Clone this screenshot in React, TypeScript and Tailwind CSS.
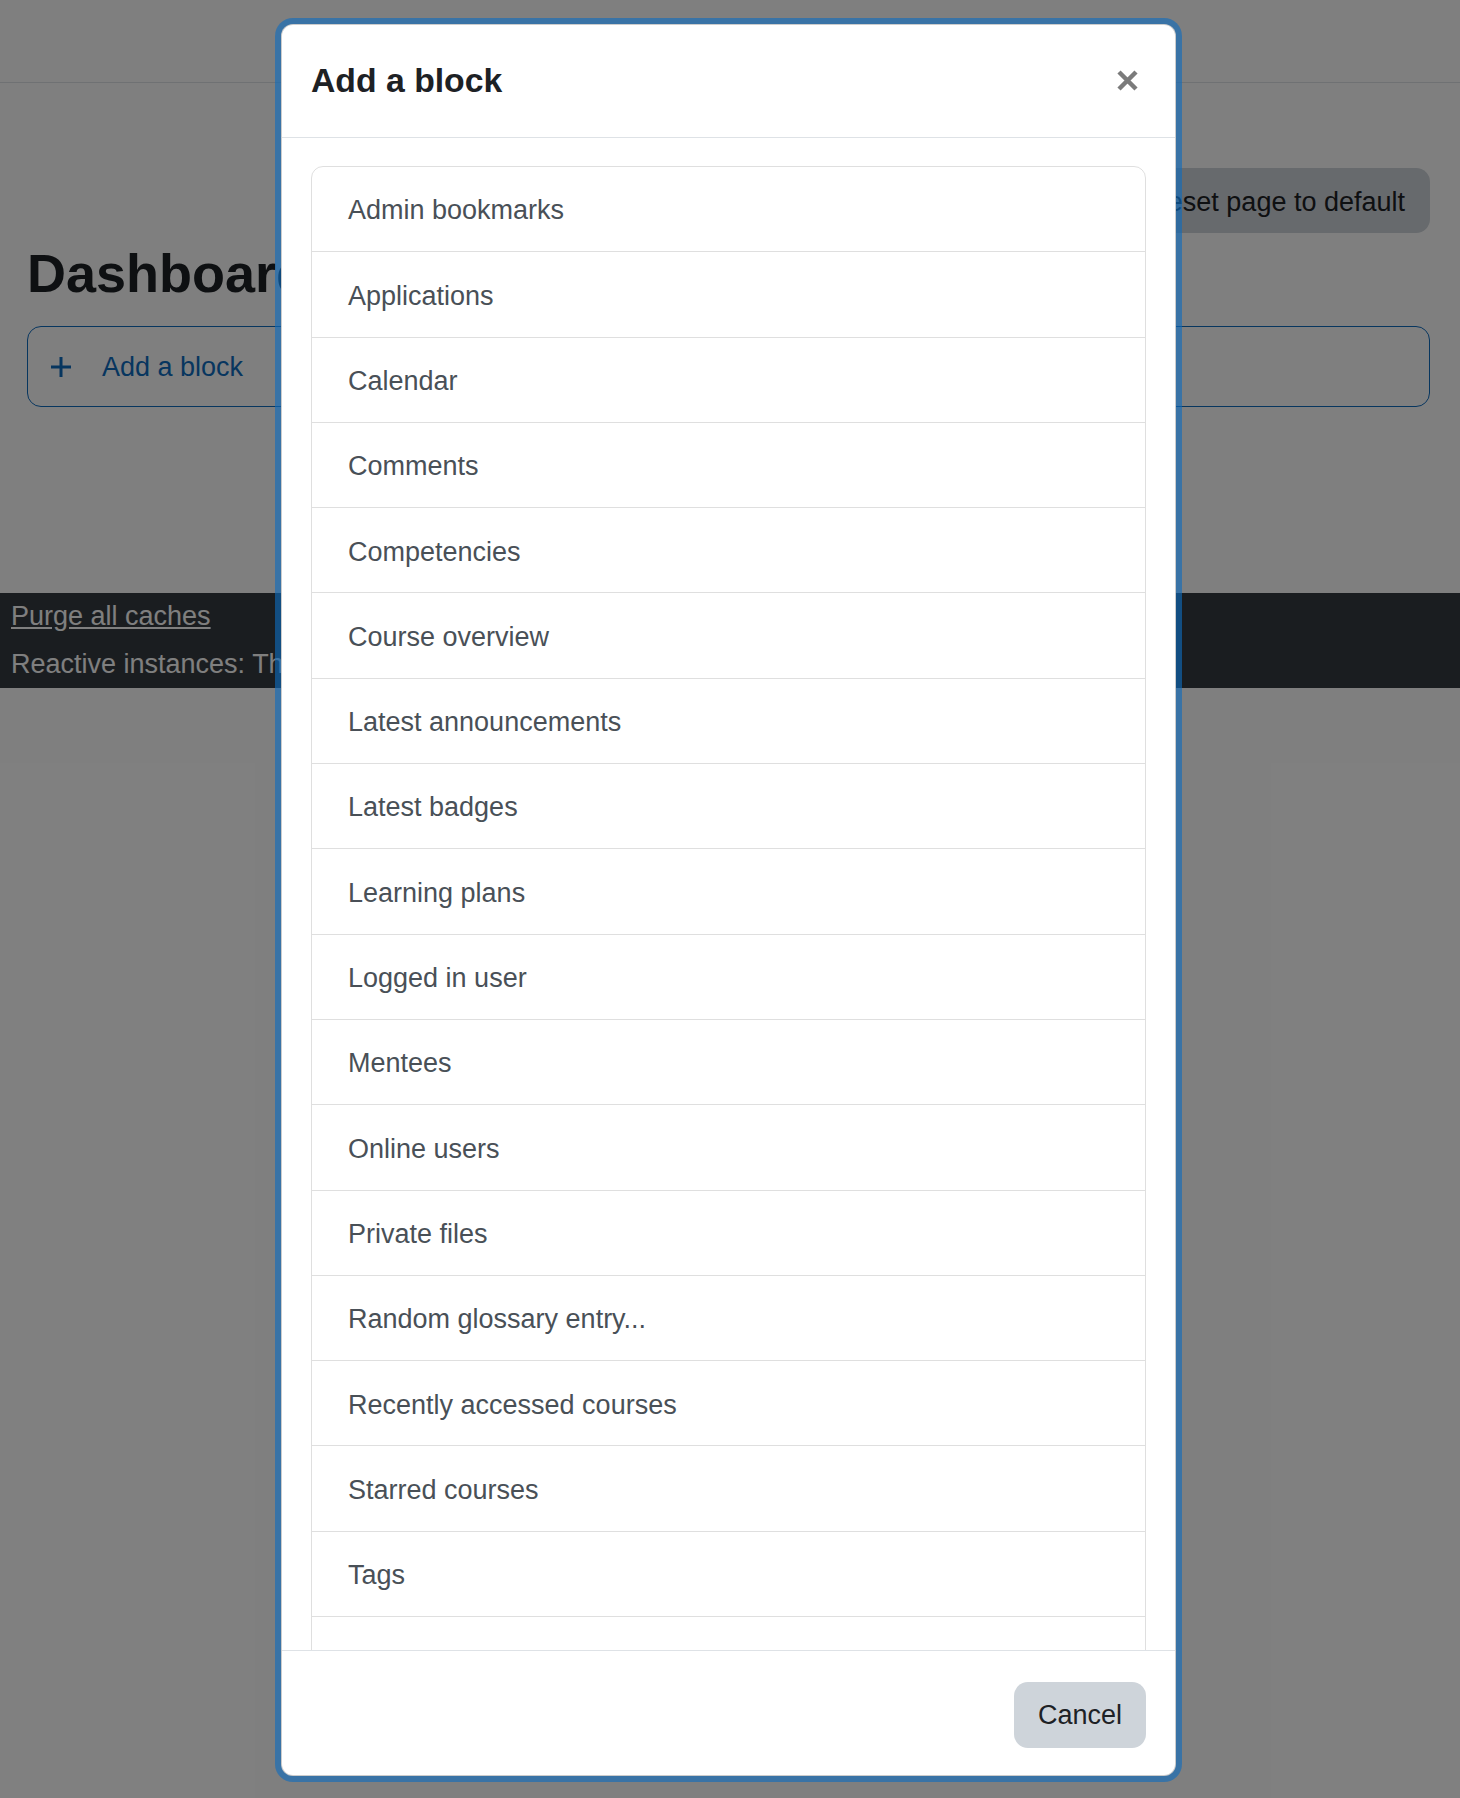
const blocks = [
  "Admin bookmarks",
  "Applications",
  "Calendar",
  "Comments",
  "Competencies",
  "Course overview",
  "Latest announcements",
  "Latest badges",
  "Learning plans",
  "Logged in user",
  "Mentees",
  "Online users",
  "Private files",
  "Random glossary entry...",
  "Recently accessed courses",
  "Starred courses",
  "Tags",
  ""
];

function PlusIcon() {
  return (
    <svg width="22" height="22" viewBox="0 0 22 22" fill="none" stroke="currentColor" strokeWidth="3">
      <path d="M11 1v20M1 11h20" />
    </svg>
  );
}

function CloseIcon() {
  return (
    <svg width="21" height="21" viewBox="0 0 21 21" fill="none" stroke="currentColor" strokeWidth="4.5">
      <path d="M2 2l17 17M19 2L2 19" />
    </svg>
  );
}

function Dashboard() {
  return (
    <div className="min-h-[1798px] bg-white">
      <header className="h-[83px] border-b border-[#dee2e6] bg-white" />
      <div className="px-[27px]">
        <div className="flex justify-end pt-[85px] pr-[3px]">
          <button
            type="button"
            className="h-[65px] rounded-[14px] bg-[#ced4da] px-[25px] pt-[3px] text-[27px] text-[#1d2125]"
          >
            Reset page to default
          </button>
        </div>
        <h2 className="mt-[8px] text-[54px] font-bold leading-[1.2] text-[#1d2125]">Dashboard</h2>
        <div className="mt-[20px] mr-[3px] flex h-[81px] items-center gap-[30px] rounded-[14px] border border-[#0f6cbf] pl-[22px] pt-[1px] text-[27px] text-[#0f6cbf]">
          <PlusIcon />
          <span>Add a block</span>
        </div>
      </div>
      <footer className="mt-[186px] h-[95px] bg-[#343a40] px-[11px] pt-[3px] text-[27px] text-white">
        <div className="leading-[40px]">
          <a href="#" className="underline">Purge all caches</a>
        </div>
        <div className="mt-[8px] leading-[40px]">Reactive instances: There are no reactive instances</div>
      </footer>
    </div>
  );
}

function AddBlockModal() {
  return (
    <div className="absolute left-[281px] top-[24px] flex h-[1752px] w-[895px] flex-col overflow-hidden rounded-[12px] border border-black/20 bg-white shadow-[0_0_0_6px_rgba(15,108,191,0.62)]">
      <div className="flex h-[113px] shrink-0 items-start justify-between border-b border-[#dee2e6] pl-[29px]">
        <h5 className="pt-[35px] text-[33.75px] font-bold leading-[1.2] text-[#1d2125]">Add a block</h5>
        <button type="button" className="mt-[45px] mr-[37px] text-[#7b7b7b]" aria-label="Close">
          <CloseIcon />
        </button>
      </div>
      <div className="min-h-0 flex-1 overflow-hidden px-[29px] pt-[28px]">
        <div className="rounded-t-[12px] border border-black/[0.125]">
          {blocks.map((name, i) => (
            <div
              key={i}
              className="flex h-[85.3px] items-center border-b border-black/[0.125] pl-[36px] pt-[3px] text-[27px] text-[#495057]"
            >
              {name}
            </div>
          ))}
        </div>
      </div>
      <div className="flex h-[125px] shrink-0 items-start justify-end border-t border-[#dee2e6] pt-[31px] pr-[29px]">
        <button
          type="button"
          className="h-[66px] rounded-[14px] bg-[#ced4da] px-[24px] text-[27px] text-[#1d2125]"
        >
          Cancel
        </button>
      </div>
    </div>
  );
}

export default function App() {
  return (
    <div className="relative h-[1798px] overflow-hidden font-['Liberation_Sans',Arial,sans-serif]">
      <Dashboard />
      <div className="absolute inset-0 bg-black/50" />
      <AddBlockModal />
    </div>
  );
}
